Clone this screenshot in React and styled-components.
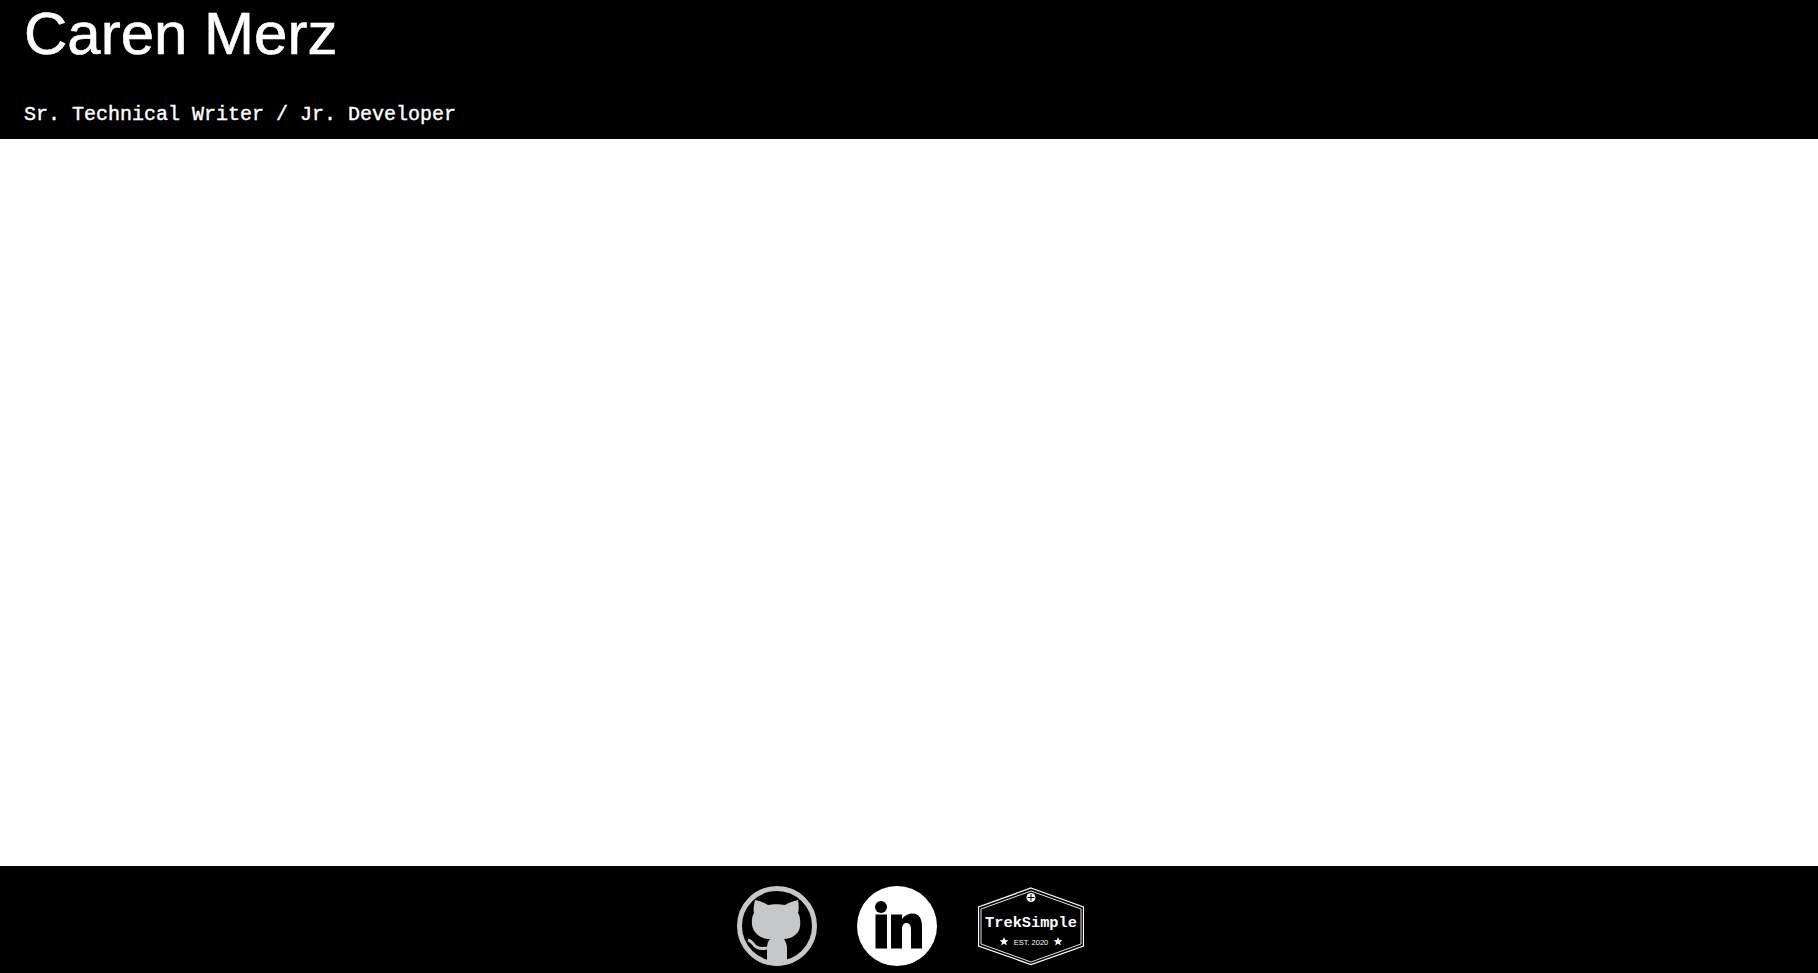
import React from "react";
import styled, { createGlobalStyle } from "styled-components";

const Global = createGlobalStyle`
  html, body { margin: 0; padding: 0; background: #fff; }
  body { height: 973px; overflow: hidden; }
`;
const Page = styled.div`
  display: flex;
  flex-direction: column;
  height: 973px;
`;
const Header = styled.header`
  background: #000;
  color: #fff;
  height: 139px;
  padding: 0 24px;
  box-sizing: border-box;
  display: flex;
  flex-direction: column;
`;
const Name = styled.h1`
  margin: 0;
  height: 71px;
  font: 400 60px/68px "Liberation Sans", Arial, sans-serif;
  -webkit-text-stroke: 0.6px #fff;
`;
const Role = styled.p`
  margin: 32px 0 0;
  font: 400 20px/24px "Liberation Mono", "Courier New", monospace;
  -webkit-text-stroke: 0.4px #fff;
`;
const Main = styled.main`
  flex: 1;
  background: #fff;
`;
const Footer = styled.footer`
  background: #000;
  height: 107px;
  display: flex;
  justify-content: center;
  align-items: flex-start;
  padding-top: 20px;
  box-sizing: border-box;
`;
const Links = styled.nav`
  display: flex;
  align-items: center;
  margin-left: 3px;
`;
const Social = styled.a`
  display: block;
  width: 80px;
  height: 80px;
  margin-right: ${(p) => p.$gap}px;
`;
const Badge = styled.a`
  display: block;
  width: 106px;
  height: 80px;
`;

const Github = () => (
  <svg width="80" height="80" viewBox="0 0 80 80">
    <circle cx="40" cy="40" r="37.5" fill="none" stroke="#c6c7c9" strokeWidth="5" />
    <path fill="#c6c7c9" d="M18 14 C23 15 28 17 31 19 C36 18 43 18 48 19 C51 17 56 15 61 14 C62 19 62 24 61 27 C64 31 64 42 61 46 C57 51 52 53 47 53 C49 56 50 59 50 62 L50 78 C44 80 36 80 30 78 L30 62 C30 58 31 55 33 53 C27 53 22 51 18 46 C14 42 14 31 17 27 C16 24 17 19 18 14 Z" />
    <path fill="none" stroke="#c6c7c9" strokeWidth="3" d="M11 54 C15 55 16 58 18 60 C21 63 25 63 30 62" />
  </svg>
);
const Linkedin = () => (
  <svg width="80" height="80" viewBox="0 0 80 80">
    <circle cx="40" cy="40" r="40" fill="#fff" />
    <circle cx="24" cy="21" r="6" fill="#000" />
    <rect x="18.5" y="28.5" width="11.5" height="34" fill="#000" />
    <path fill="#000" d="M34 28.5 H45 V33 C47 30 51 27.5 55.5 27.5 C62.5 27.5 65 33 65 41 V62.5 H54 V44 C54 39 52.5 37 49.5 37 C46.5 37 45 39 45 44 V62.5 H34 Z" />
  </svg>
);
const Trek = () => (
  <svg width="106" height="80" viewBox="0 0 106 80">
    <path d="M53 2 L105.5 21 V60 L53 78.5 L0.5 60 V21 Z" fill="none" stroke="#fff" strokeWidth="1.3" />
    <path d="M53 5 L103 23 V58 L53 76 L3 58 V23 Z" fill="none" stroke="#fff" strokeWidth="0.9" />
    <circle cx="53" cy="11.5" r="4.5" fill="#fff" />
    <path d="M53 8 V15 M49.5 11.5 H56.5" stroke="#000" strokeWidth="1" />
    <text x="53" y="41" textAnchor="middle" fill="#fff" fontFamily="'Liberation Mono', monospace" fontWeight="700" fontSize="15.3">TrekSimple</text>
    <text x="53" y="58.5" textAnchor="middle" fill="#fff" fontFamily="'Liberation Sans', sans-serif" fontSize="7.5">EST. 2020</text>
    <path fill="#fff" d="M26 51 L27.2 54 L30.4 54.2 L28 56.2 L28.8 59.4 L26 57.6 L23.2 59.4 L24 56.2 L21.6 54.2 L24.8 54 Z M80 51 L81.2 54 L84.4 54.2 L82 56.2 L82.8 59.4 L80 57.6 L77.2 59.4 L78 56.2 L75.6 54.2 L78.8 54 Z" />
  </svg>
);

export default function App() {
  return (
    <Page>
      <Global />
      <Header>
        <Name>Caren Merz</Name>
        <Role>Sr. Technical Writer / Jr. Developer</Role>
      </Header>
      <Main />
      <Footer>
        <Links>
          <Social href="#" $gap={40}><Github /></Social>
          <Social href="#" $gap={41}><Linkedin /></Social>
          <Badge href="#"><Trek /></Badge>
        </Links>
      </Footer>
    </Page>
  );
}
